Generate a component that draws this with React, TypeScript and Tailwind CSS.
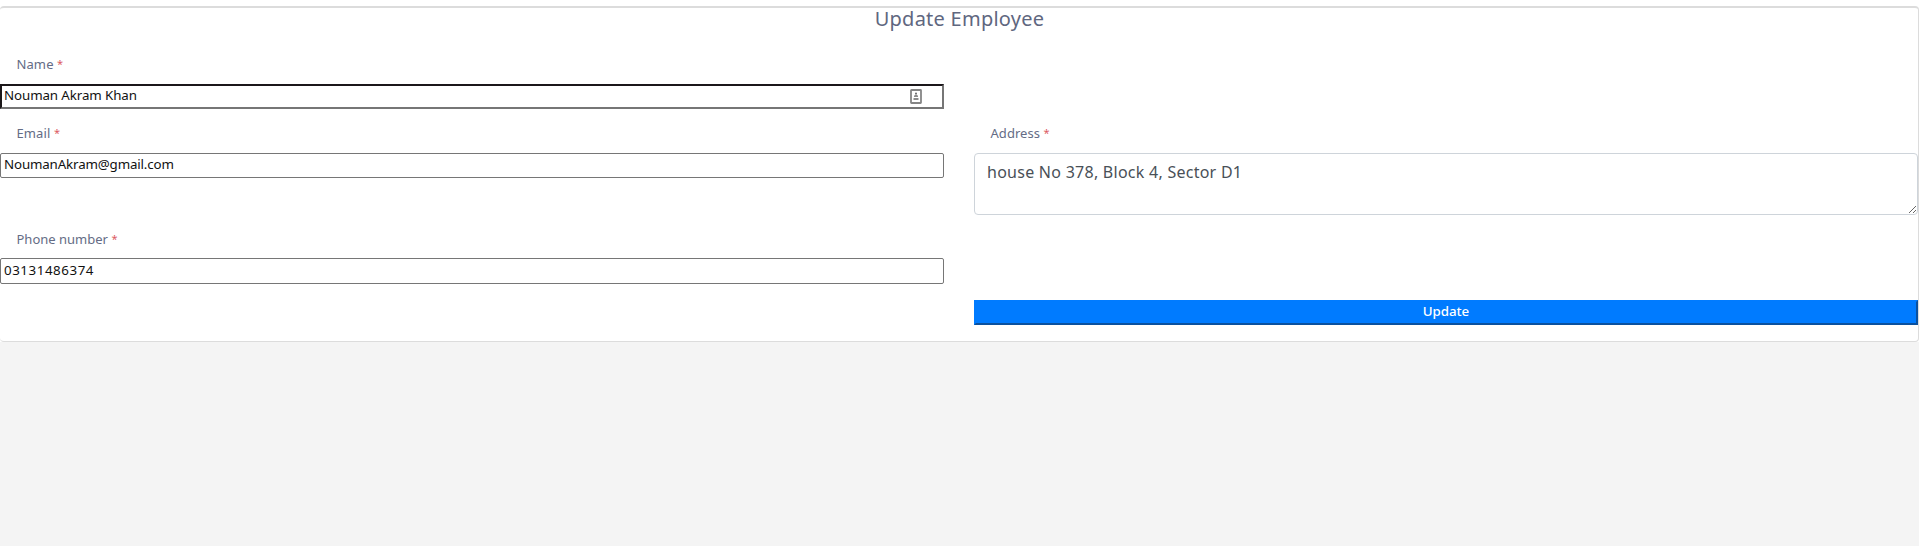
import type { ReactNode } from "react";

function Label({ children, className }: { children: ReactNode; className: string }) {
  return (
    <label className="block h-[45px] pl-[16.5px] text-[13px] leading-[20px] whitespace-nowrap text-[#646c85]">
      <span className={className}>{children}</span>
      <span className="inline-block -translate-y-px pl-[3.5px] text-[11px] leading-[10px] text-[#dc5b62]">*</span>
    </label>
  );
}

const thin =
  "block w-full rounded-[2px] border border-[#767676] bg-white pb-[3px] pl-[3px] text-[13.33px] text-[#111] outline-none";

export default function App() {
  return (
    <div className="h-[546px] overflow-hidden bg-[#f4f4f4] font-['Noto_Sans',sans-serif]">
      <div className="bg-white pt-[6px]">
        <form className="h-[336px] rounded-[4px] border border-t-2 border-l-0 border-[#dcdcdc] bg-white">
          <h1 className="h-[46px] pl-px text-center text-[20px] leading-[22px] tracking-[0.25px] text-[#5f6780]">
            Update Employee
          </h1>
          <div className="grid grid-cols-[944px_944px] gap-x-[30px]">
            <div>
              <Label className="tracking-[0.1px]">Name</Label>
              <div className="-mt-[15px] flex h-[25px] items-center border-2 border-t-[#1b171a] border-r-[#767676] border-b-[#767676] border-l-[#1b171a] bg-white">
                <input
                  className="h-[21px] min-w-0 flex-1 pb-[3px] pl-[2px] text-[13.33px] tracking-[-0.1px] text-[#111] outline-none"
                  defaultValue="Nouman Akram Khan"
                />
                <svg className="mr-[20px] h-[15px] w-[12px]" viewBox="0 0 12 15">
                  <rect x="1" y="1" width="10" height="13" rx="0.5" fill="#fff" stroke="#858585" strokeWidth="1.8" />
                  <circle cx="6" cy="4.5" r="1" fill="#666" />
                  <path d="M4 8V6.8L6 5.2l2 1.6V8zM3.5 9h5v2h-5z" fill="#8c8c8c" />
                </svg>
              </div>
            </div>
            <div />
            <div className="pt-[14px]">
              <Label className="tracking-[0.1px]">Email</Label>
              <input className={`${thin} -mt-[15px] h-[25px] tracking-[-0.15px]`} defaultValue="NoumanAkram@gmail.com" />
            </div>
            <div className="pt-[14px]">
              <Label className="tracking-[0.05px]">Address</Label>
              <textarea
                className="-mt-[15px] block h-[62px] w-full resize rounded-[4px] border border-[#ced4da] bg-white px-3 py-[6px] text-[16px] leading-6 tracking-[0.26px] text-[#495057] outline-none"
                defaultValue="house No 378, Block 4, Sector D1"
              />
            </div>
            <div className="pt-[14px]">
              <Label className="tracking-[0px]">Phone number</Label>
              <input className={`${thin} -mt-[16px] h-[26px] tracking-[0.56px]`} defaultValue="03131486374" />
            </div>
            <div />
            <div />
            <button
              type="button"
              className="mt-4 h-[25px] border-2 border-t-[#007bff] border-r-[#0b519f] border-b-[#0b519f] border-l-[#007bff] bg-[#007bff] pb-[3px] text-[13.33px] leading-[18px] font-medium tracking-[-0.05px] text-white"
            >
              Update
            </button>
          </div>
        </form>
      </div>
    </div>
  );
}
